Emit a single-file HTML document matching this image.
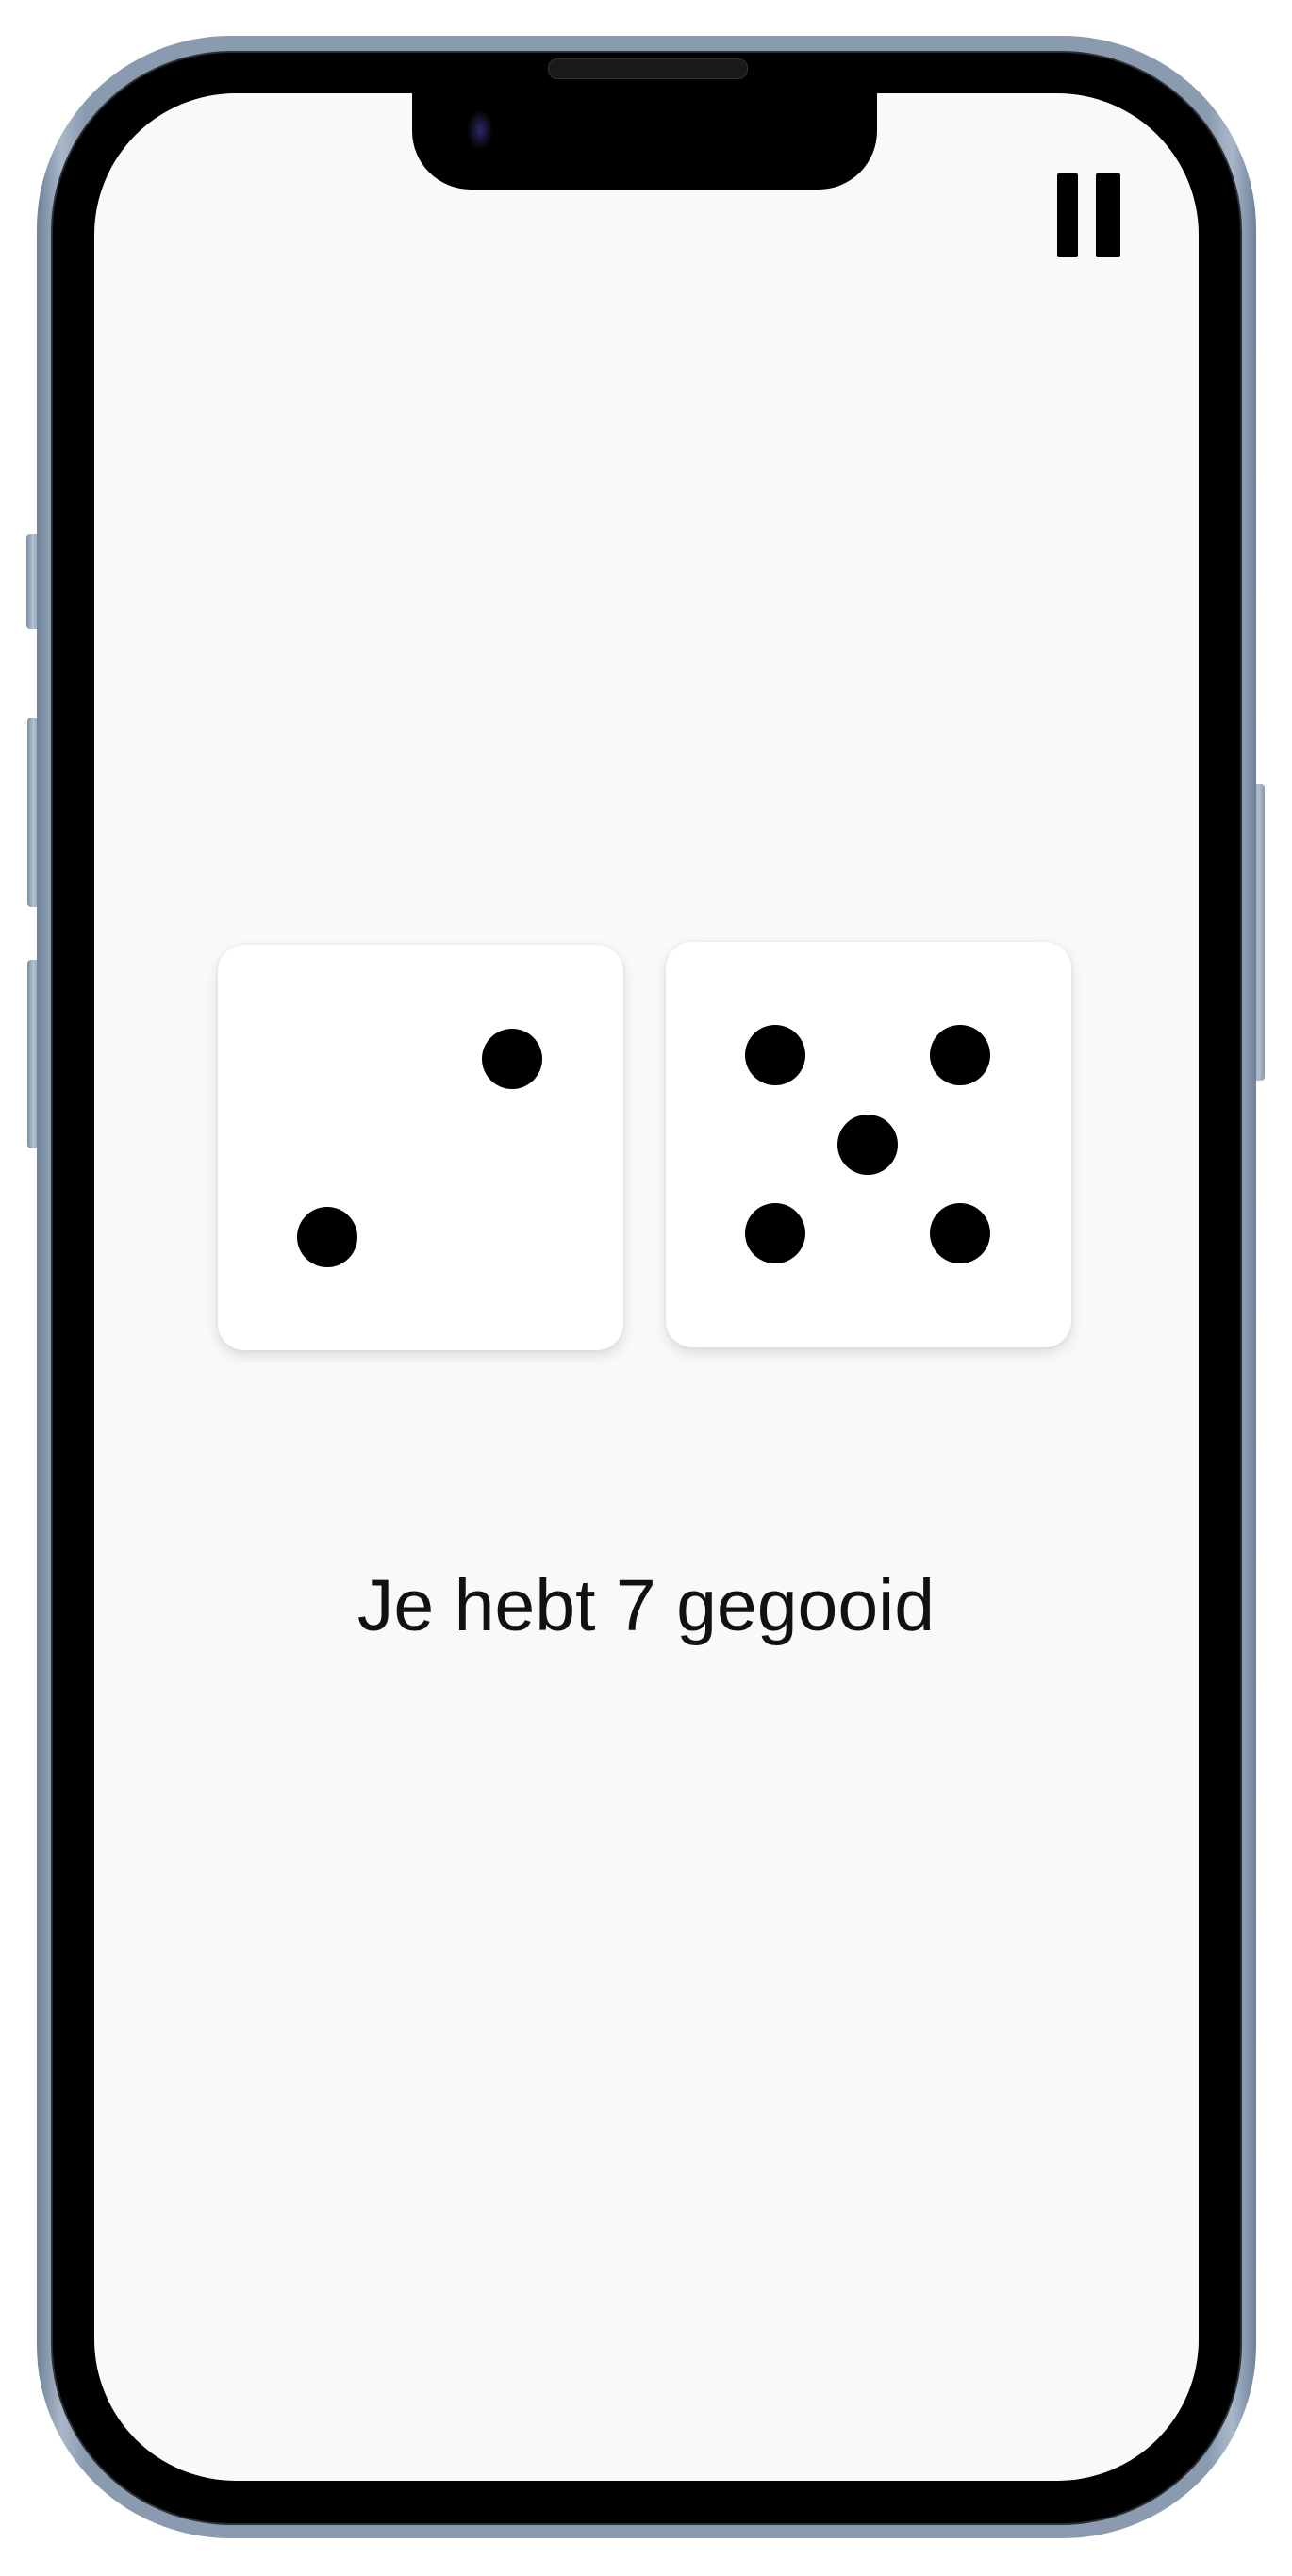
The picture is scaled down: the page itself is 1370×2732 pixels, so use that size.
<!DOCTYPE html>
<html><head><meta charset="utf-8"><style>
html,body{margin:0;padding:0;background:#fff;}
body{width:1370px;height:2732px;position:relative;overflow:hidden;font-family:"Liberation Sans",sans-serif;}
.abs{position:absolute;}
.frame{left:39px;top:38px;width:1293px;height:2654px;border-radius:205px;background:linear-gradient(90deg,#6f8299,#a9b8c9 2%,#8a9bb0 4%,#8a9bb0 96%,#a9b8c9 98%,#6f8299);}
.bezel{left:56px;top:56px;width:1259px;height:2620px;border-radius:190px;background:#000;box-shadow:0 0 0 2px #2a2f36;}
.screen{left:100px;top:99px;width:1171px;height:2532px;border-radius:150px;background:#f9f9f9;overflow:hidden;}
.notch{left:337px;top:-10px;width:493px;height:112px;background:#000;border-radius:0 0 62px 62px;}
.btn{background:linear-gradient(90deg,#7d8ea3,#b4c2d1,#8798ad);border-radius:4px;}
.die{width:430px;height:430px;background:#fff;border-radius:28px;box-shadow:0 6px 14px rgba(0,0,0,.12),0 0 4px rgba(0,0,0,.06);}
.pip{width:64px;height:64px;border-radius:50%;background:#000;}
.txt{left:0;width:1370px;top:1658px;text-align:center;font-size:77px;color:#111;line-height:90px;}
</style></head><body>
<div class="abs btn" style="left:28px;top:566px;width:14px;height:101px"></div>
<div class="abs btn" style="left:29px;top:761px;width:13px;height:201px"></div>
<div class="abs btn" style="left:29px;top:1018px;width:13px;height:200px"></div>
<div class="abs btn" style="left:1328px;top:832px;width:13px;height:314px"></div>
<div class="abs frame"></div>
<div class="abs bezel"></div>
<div class="abs" style="left:581px;top:62px;width:210px;height:20px;border-radius:10px;background:#1a1a1a;border:1px solid #333"></div>
<div class="abs screen">
  <div class="abs notch"></div>
  <div class="abs" style="left:1021px;top:85px;width:22px;height:89px;background:#000;border-radius:2px"></div>
  <div class="abs" style="left:1062px;top:85px;width:26px;height:89px;background:#000;border-radius:2px"></div>
</div>
<div class="abs" style="left:496px;top:118px;width:26px;height:40px;border-radius:50%;background:radial-gradient(ellipse,#2a2a6a 0,#111128 45%,#050508 70%)"></div>
<div class="abs die" style="left:231px;top:1002px"></div>
<div class="abs die" style="left:706px;top:999px"></div>
<div class="abs pip" style="left:511px;top:1091px"></div>
<div class="abs pip" style="left:315px;top:1280px"></div>
<div class="abs pip" style="left:790px;top:1087px"></div>
<div class="abs pip" style="left:986px;top:1087px"></div>
<div class="abs pip" style="left:888px;top:1182px"></div>
<div class="abs pip" style="left:790px;top:1276px"></div>
<div class="abs pip" style="left:986px;top:1276px"></div>
<div class="abs txt">Je hebt 7 gegooid</div>
</body></html>
